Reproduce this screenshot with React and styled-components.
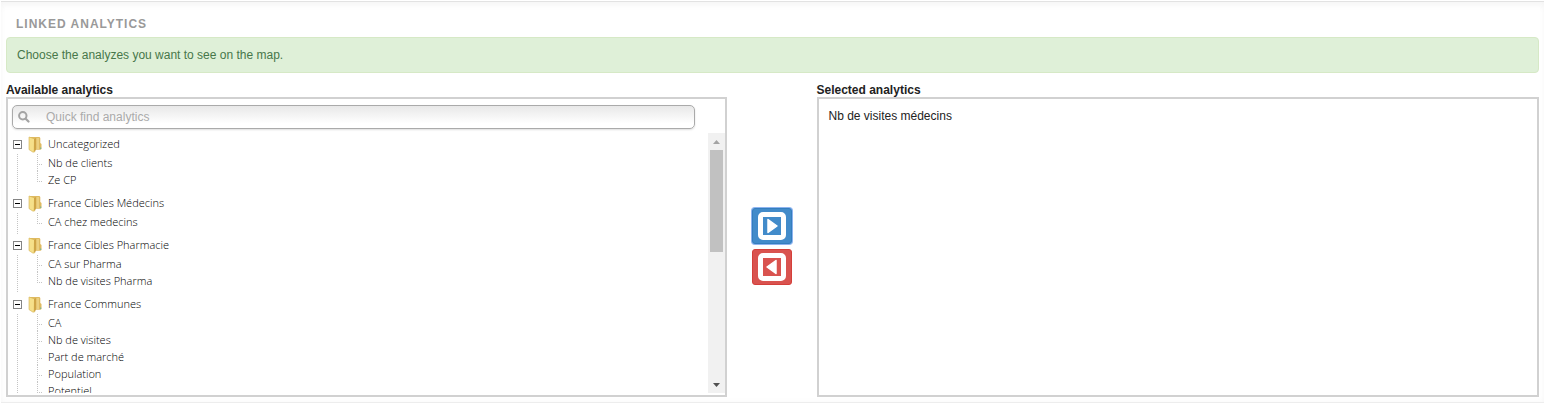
import React from "react";
import styled, { createGlobalStyle, css } from "styled-components";

const GlobalStyle = createGlobalStyle`
  *, *::before, *::after { box-sizing: border-box; }
  body {
    margin: 0;
    background: #fff;
    color: #222;
    font-family: "Liberation Sans", Arial, sans-serif;
    font-size: 12px;
    line-height: 16px;
  }
`;

const Panel = styled.section`
  margin: 1px 3px 0 1px;
  padding: 0 5px 5px;
  border-top: 1px solid #e2e2e2;
  border-bottom: 1px solid #ededed;
  background: #fff;
  box-shadow: inset 0 6px 8px -4px #f4f4f4, inset 0 0 6px #f8f8f8;
`;

const Title = styled.h2`
  margin: 0;
  padding: 14px 10px 5px;
  font-size: 12px;
  line-height: 16px;
  font-weight: bold;
  letter-spacing: 1px;
  text-transform: uppercase;
  color: #999;
`;

const Notice = styled.p`
  margin: 0 0 9px;
  padding: 9px 10px;
  border: 1px solid #d6e9c6;
  border-radius: 4px;
  background: #dff0d8;
  color: #47774a;
`;

const Columns = styled.div`
  display: grid;
  grid-template-columns: calc(50% - 46px) 90px 1fr;
`;

const Column = styled.div`
  display: flex;
  flex-direction: column;
  min-width: 0;
`;

const ColumnLabel = styled.h3`
  margin: 0;
  padding-top: 1px;
  font-size: 12px;
  line-height: 14px;
  font-weight: bold;
`;

const Box = styled.div`
  height: 300px;
  border: 2px solid #d1d1d1;
  background: #fff;
`;

const AvailableBox = styled(Box)`
  display: flex;
  flex-direction: column;
  padding-bottom: 2px;
`;

const SearchField = styled.label`
  display: flex;
  align-items: center;
  gap: 16px;
  height: 24px;
  margin: 6px 30px 4px 4px;
  padding: 0 5px;
  border: 1px solid #aaa;
  border-radius: 5px;
  background: linear-gradient(#e8e8e8, #fff 80%);
  box-shadow: 0 1px 2px #ddd;
`;

const SearchInput = styled.input`
  flex: 1;
  min-width: 0;
  padding: 0;
  border: 0;
  outline: 0;
  background: transparent;
  font: inherit;
  color: #555;
  &::placeholder { color: #aaa; opacity: 1; }
`;

const TreeArea = styled.div`
  display: flex;
  flex: 1;
  min-height: 0;
`;

const Tree = styled.ul`
  flex: 1;
  min-width: 0;
  margin: 0;
  padding: 0 0 0 5px;
  overflow: hidden;
  list-style: none;
  font-family: "Open Sans", sans-serif;
  font-size: 11px;
  font-weight: 300;
  color: #000;
`;

const GroupHeader = styled.div`
  display: flex;
  align-items: center;
  height: 21px;
  padding-top: 1px;
`;

const Toggle = styled.button`
  display: flex;
  width: 9px;
  height: 9px;
  margin-right: 6px;
  padding: 0;
  border: 0;
  background: #fff;
`;

const GroupName = styled.span`
  margin-left: 5px;
  line-height: 16px;
  white-space: nowrap;
`;

const dots = css`
  background-repeat: repeat-y;
  background-image: linear-gradient(#c4c4c4 50%, transparent 50%);
  background-size: 1px 2px;
`;

const Children = styled.ul`
  ${dots}
  background-position: 4px 0;
  margin: 0;
  padding: 0 0 4px 24px;
  list-style: none;
`;

const Item = styled.li`
  display: flex;
  height: 17px;
  line-height: 17px;
  white-space: nowrap;
`;

const Branch = styled.span`
  ${dots}
  width: 6px;
  height: ${(p) => (p.$last ? "11px" : "17px")};
  margin-right: 5px;
  &::after {
    content: "";
    display: block;
    height: 1px;
    margin-top: 10px;
    background: repeating-linear-gradient(90deg, #c4c4c4 0 1px, transparent 1px 2px);
  }
`;

const ScrollTrack = styled.div`
  display: flex;
  flex-direction: column;
  align-items: center;
  width: 17px;
  background: #f1f1f1;
`;

const ScrollButton = styled.button`
  display: flex;
  align-items: center;
  justify-content: center;
  width: 17px;
  height: 17px;
  padding: 0;
  border: 0;
  background: transparent;
`;

const ScrollThumb = styled.div`
  width: 13px;
  height: 102px;
  margin-bottom: auto;
  background: #c1c1c1;
`;

const Transfer = styled.div`
  display: flex;
  flex-direction: column;
  align-items: center;
  justify-content: center;
  gap: 5px;
  padding-top: 14px;
`;

const MoveButton = styled.button`
  display: flex;
  align-items: center;
  justify-content: center;
  width: 40px;
  height: 36px;
  padding: 0;
  border: 1px solid ${(p) => p.$edge};
  border-radius: 3px;
  background: ${(p) => p.$fill};
  box-shadow: ${(p) => (p.$focused ? "0 0 0 1px #8db4f0" : "none")};
`;

const SelectedList = styled.ul`
  margin: 0;
  padding: 9px 10px;
  list-style: none;
`;

const groups = [
  { name: "Uncategorized", items: ["Nb de clients", "Ze CP"] },
  { name: "France Cibles Médecins", items: ["CA chez medecins"] },
  { name: "France Cibles Pharmacie", items: ["CA sur Pharma", "Nb de visites Pharma"] },
  {
    name: "France Communes",
    items: ["CA", "Nb de visites", "Part de marché", "Population", "Potentiel"],
    open: true,
  },
];

function MinusIcon() {
  return (
    <svg width="9" height="9" viewBox="0 0 9 9" shapeRendering="crispEdges">
      <rect x="0.5" y="0.5" width="8" height="8" fill="#fff" stroke="#848484" />
      <path d="M2 4h5v1H2z" fill="#000" />
    </svg>
  );
}

function FolderIcon() {
  return (
    <svg width="15" height="17" viewBox="0 0 15 17">
      <path d="M2 1h9.500l.8 1v5l1.200 1v5l-1 .8H5z" fill="#dfba60" />
      <path d="M8.500 2h2.500v11H8.500z" fill="#ecd081" />
      <path d="M1 1l5.500 1.800.3 13L5 16.200 1 13.600z" fill="#f6e08a" stroke="#d3b053" strokeWidth=".6" />
      <path d="M6 3L8 2v12l-2.200 2z" fill="#cfa548" />
      <path d="M12 11.500h1.200v1.500H12z" fill="#7fb79a" />
    </svg>
  );
}

function SearchIcon() {
  return (
    <svg width="12" height="12" viewBox="0 0 12 12" fill="none" stroke="#a3a3a3">
      <circle cx="4.800" cy="4.800" r="3.700" strokeWidth="2" />
      <path d="M7.700 7.700l2.800 2.800" strokeWidth="2.200" strokeLinecap="round" />
    </svg>
  );
}

function ArrowIcon({ left }) {
  return (
    <svg width="28" height="28" viewBox="0 0 28 28">
      <path
        fillRule="evenodd"
        fill="#fff"
        d="M5 0h18a5 5 0 0 1 5 5v18a5 5 0 0 1-5 5H5a5 5 0 0 1-5-5V5a5 5 0 0 1 5-5zM5 5v18h18V5z"
      />
      <path
        d={left ? "M18 7.500v13L9 14z" : "M10 7.500v13l9-6.500z"}
        fill="#fff"
        stroke="#fff"
        strokeWidth="1.500"
        strokeLinejoin="round"
      />
    </svg>
  );
}

export default function App() {
  return (
    <>
      <GlobalStyle />
      <Panel>
        <Title>Linked analytics</Title>
        <Notice>Choose the analyzes you want to see on the map.</Notice>
        <Columns>
          <Column>
            <ColumnLabel>Available analytics</ColumnLabel>
            <AvailableBox>
              <SearchField>
                <SearchIcon />
                <SearchInput type="text" placeholder="Quick find analytics" aria-label="Quick find analytics" />
              </SearchField>
              <TreeArea>
                <Tree>
                  {groups.map((g) => (
                    <li key={g.name}>
                      <GroupHeader>
                        <Toggle type="button" aria-label={`Collapse ${g.name}`}>
                          <MinusIcon />
                        </Toggle>
                        <FolderIcon />
                        <GroupName>{g.name}</GroupName>
                      </GroupHeader>
                      <Children>
                        {g.items.map((item, i) => (
                          <Item key={item}>
                            <Branch $last={!g.open && i === g.items.length - 1} />
                            {item}
                          </Item>
                        ))}
                      </Children>
                    </li>
                  ))}
                </Tree>
                <ScrollTrack>
                  <ScrollButton type="button" aria-label="Scroll up">
                    <svg width="7" height="4" viewBox="0 0 7 4"><path d="M0 4l3.500-4L7 4z" fill="#a3a3a3" /></svg>
                  </ScrollButton>
                  <ScrollThumb />
                  <ScrollButton type="button" aria-label="Scroll down">
                    <svg width="7" height="4" viewBox="0 0 7 4"><path d="M0 0l3.500 4L7 0z" fill="#505050" /></svg>
                  </ScrollButton>
                </ScrollTrack>
              </TreeArea>
            </AvailableBox>
          </Column>
          <Transfer>
            <MoveButton type="button" aria-label="Add analytic" $fill="#428bca" $edge="#357ebd" $focused>
              <ArrowIcon />
            </MoveButton>
            <MoveButton type="button" aria-label="Remove analytic" $fill="#d9534f" $edge="#d43f3a">
              <ArrowIcon left />
            </MoveButton>
          </Transfer>
          <Column>
            <ColumnLabel>Selected analytics</ColumnLabel>
            <Box>
              <SelectedList>
                <li>Nb de visites médecins</li>
              </SelectedList>
            </Box>
          </Column>
        </Columns>
      </Panel>
    </>
  );
}
